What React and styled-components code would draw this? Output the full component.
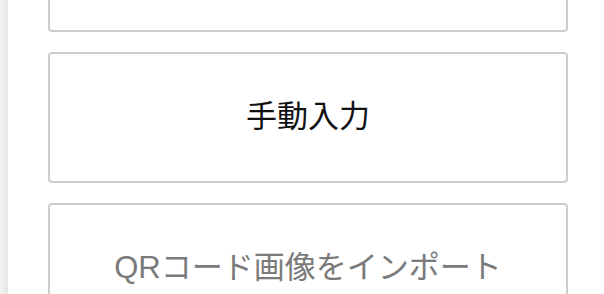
import React from "react";
import styled, { createGlobalStyle } from "styled-components";

const Global = createGlobalStyle`
  html, body {
    margin: 0;
    padding: 0;
    background: #ffffff;
    overflow: hidden;
  }
  body {
    font-family: "Liberation Sans", "Noto Sans CJK JP", sans-serif;
  }
`;

const Page = styled.div`
  display: flex;
  width: 604px;
  height: 294px;
  overflow: hidden;
`;

const EdgeShade = styled.div`
  flex: 0 0 8px;
  background: linear-gradient(to right, #f3f3f3, #e6e6e6);
`;

const Column = styled.div`
  display: flex;
  flex-direction: column;
  gap: 20px;
  padding-left: 40px;
  margin-top: -99px;
`;

const OptionButton = styled.button`
  box-sizing: border-box;
  width: 520px;
  height: 131px;
  flex: 0 0 auto;
  display: flex;
  align-items: center;
  justify-content: center;
  border: 2px solid #cdcdcd;
  border-radius: 4px;
  background: #ffffff;
  font-family: "Liberation Sans", "Noto Sans CJK JP", sans-serif;
  font-size: 31px;
  line-height: 1;
  color: ${(p) => (p.$disabled ? "#7a7a7a" : "#111111")};
  padding: 0 0 2px;
  cursor: pointer;
`;

export default function App() {
  return (
    <>
      <Global />
      <Page>
        <EdgeShade />
        <Column>
          <OptionButton aria-label="カメラで読み取る" />
          <OptionButton>手動入力</OptionButton>
          <OptionButton $disabled>QRコード画像をインポート</OptionButton>
        </Column>
      </Page>
    </>
  );
}
